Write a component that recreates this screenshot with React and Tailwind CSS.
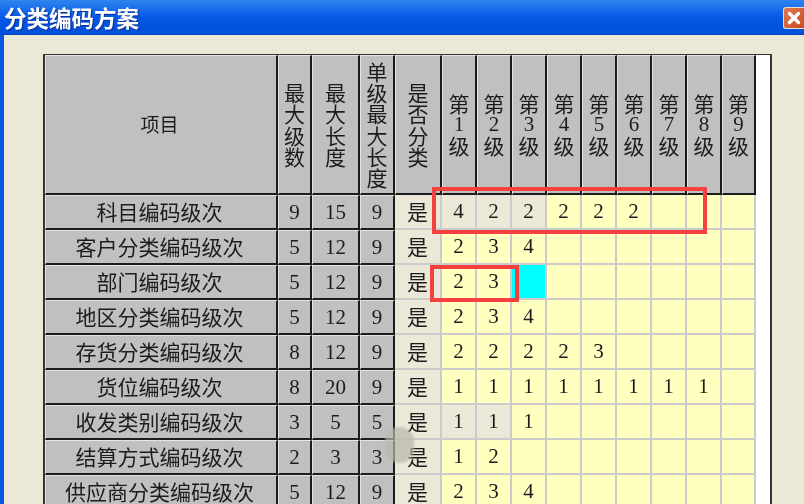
import { X } from 'lucide-react';

const gridCols = 'grid grid-cols-[233px_34px_48px_35px_47px_repeat(8,35px)_34px]';
const cjk = "font-['SimSun','Noto_Sans_CJK_SC',sans-serif]";
const headCell = `flex items-center justify-center bg-[#c0c0c0] border-t border-l border-t-[#e4e4e4] border-l-[#e4e4e4] border-r-2 border-b-2 border-r-[#1c1c1c] border-b-[#1c1c1c] text-[#1c1c1c] text-center`;
const gridCell = 'flex items-center justify-center border-r-2 border-b-2 border-r-[#cbcbcb] border-b-[#cbcbcb] text-[#1c1c1c]';

const rows = [
  { name: '科目编码级次', nums: [9, 15, 9], levels: [4, 2, 2, 2, 2, 2], beige: 3 },
  { name: '客户分类编码级次', nums: [5, 12, 9], levels: [2, 3, 4] },
  { name: '部门编码级次', nums: [5, 12, 9], levels: [2, 3], cyan: 2 },
  { name: '地区分类编码级次', nums: [5, 12, 9], levels: [2, 3, 4] },
  { name: '存货分类编码级次', nums: [8, 12, 9], levels: [2, 2, 2, 2, 3] },
  { name: '货位编码级次', nums: [8, 20, 9], levels: [1, 1, 1, 1, 1, 1, 1, 1] },
  { name: '收发类别编码级次', nums: [3, 5, 5], levels: [1, 1, 1], beige: 2 },
  { name: '结算方式编码级次', nums: [2, 3, 3], levels: [1, 2] },
  { name: '供应商分类编码级次', nums: [5, 12, 9], levels: [2, 3, 4] },
];

const levelCols = [1, 2, 3, 4, 5, 6, 7, 8, 9];

const Stack = ({ chars }) => (
  <div className="flex flex-col items-center text-[21px]">
    {chars.map((c, i) =>
      typeof c === 'number' ? (
        <span key={i} className="block h-[21.3px] leading-[21.3px] font-['Liberation_Serif',serif]">{c}</span>
      ) : (
        <span key={i} className="block h-[21.3px] leading-[21.3px]">{c}</span>
      )
    )}
  </div>
);

const Digit = ({ value }) => (
  <span className="font-['Liberation_Serif',serif] text-[21px] leading-none">{value}</span>
);

const Row = ({ row }) => (
  <div className={`${gridCols} h-[35px]`}>
    <div className={`${headCell} text-[21px] pr-[3px]`}>{row.name}</div>
    {row.nums.map((n, i) => (
      <div key={i} className={headCell}>
        <Digit value={n} />
      </div>
    ))}
    <div className={`${gridCell} bg-[#ebe8d8] text-[21px]`}>是</div>
    {levelCols.map((_, i) => {
      let bg = 'bg-[#ffffc0]';
      if (row.beige && i < row.beige) bg = 'bg-[#ebe8d8]';
      if (row.cyan === i) bg = 'bg-[#00ffff]';
      return (
        <div key={i} className={`${gridCell} ${bg}`}>
          {row.levels[i] !== undefined && <Digit value={row.levels[i]} />}
        </div>
      );
    })}
  </div>
);

export default function App() {
  return (
    <div className={`w-[804px] h-[504px] overflow-hidden bg-[#ebe8d8] flex flex-col blur-[0.3px] ${cjk}`}>
      <div className="h-[35px] shrink-0 flex items-center justify-between pl-[4px] bg-gradient-to-b from-[#2f84f0] via-[#0658e4] to-[#0050dc] border-b border-[#0a3fc0]">
        <span className="text-white font-bold text-[22.5px] leading-none [text-shadow:1px_1px_1px_#0a2f90]">
          分类编码方案
        </span>
        <div className="w-[21px] h-[22px] mb-[-2px] rounded-l-[3px] border border-r-0 border-[#e8e0d8] bg-gradient-to-br from-[#e07a50] to-[#c84a20] flex items-center justify-center">
          <X className="w-[18px] h-[18px] text-white" strokeWidth={4.5} />
        </div>
      </div>

      <div className="flex-1 min-h-0 flex">
        <div className="w-[4px] shrink-0 bg-[#0b55e6]" />
        <div className="pl-[39px] pt-[19px]">
          <div className="relative w-[729px] bg-white border-t border-l-2 border-r-2 border-[#333]">
            <div className={`${gridCols} h-[140px]`}>
              <div className={`${headCell} text-[19px] pr-[3px]`}>项目</div>
              <div className={headCell}><Stack chars={[...'最大级数']} /></div>
              <div className={headCell}><Stack chars={[...'最大长度']} /></div>
              <div className={headCell}><Stack chars={[...'单级最大长度']} /></div>
              <div className={headCell}><Stack chars={[...'是否分类']} /></div>
              {levelCols.map((n) => (
                <div key={n} className={headCell}>
                  <Stack chars={['第', n, '级']} />
                </div>
              ))}
            </div>
            {rows.map((row) => (
              <Row key={row.name} row={row} />
            ))}

            {/* annotation boxes drawn over the table */}
            <div className="absolute left-[387px] top-[132px] w-[275px] h-[47px] border-[4px] border-[#f54040]" />
            <div className="absolute left-[385px] top-[210px] w-[89px] h-[37px] border-[4px] border-[#f54040]" />
            <div className="absolute left-[340px] top-[372px] w-[29px] h-[36px] rounded-full bg-[#b8b8a8]/70 blur-[1px]" />
          </div>
        </div>
      </div>
    </div>
  );
}
